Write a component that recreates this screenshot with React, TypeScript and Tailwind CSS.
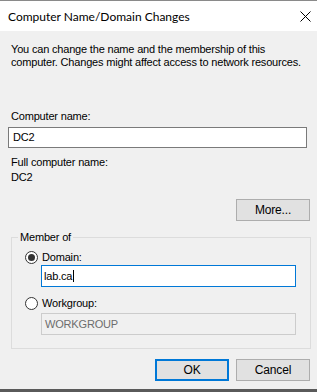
import React from "react"

function Radio({ checked }: { checked?: boolean }) {
  return (
    <span className="flex h-[13px] w-[13px] shrink-0 items-center justify-center rounded-full border border-[#333333] bg-white">
      {checked && <span className="h-[7px] w-[7px] rounded-full bg-[#333333]" />}
    </span>
  )
}

function WinButton({ label, primary }: { label: string; primary?: boolean }) {
  return (
    <button
      className={
        "flex h-[22px] w-[74px] items-center justify-center bg-[#e1e1e1] text-[12px] text-black " +
        (primary ? "border-2 border-[#0078d7]" : "border border-[#adadad]")
      }
    >
      {label}
    </button>
  )
}

export default function App() {
  return (
    <div className="flex h-[392px] w-[317px] flex-col overflow-hidden border-t border-b-[3px] border-t-[#8a8a8a] border-b-[#5a5a5a] bg-[#f0f0f0] font-['Liberation_Sans',Arial,sans-serif] text-[11px] leading-[13px] tracking-[-0.18px] text-black">
      {/* title bar */}
      <div className="flex h-[30px] shrink-0 items-center justify-between bg-white pl-[8px] pr-[6px]">
        <span className="font-['Lato',sans-serif] text-[12px] tracking-normal">Computer Name/Domain Changes</span>
        <svg width="11" height="11" viewBox="0 0 11 11">
          <path d="M0.5 0.5 L10.5 10.5 M10.5 0.5 L0.5 10.5" stroke="#000" strokeWidth="1" />
        </svg>
      </div>

      {/* body */}
      <div className="flex flex-1 flex-col">
        <p className="ml-[11px] mt-[12px]">
          You can change the name and the membership of this
          <br />
          computer. Changes might affect access to network resources.
        </p>

        <div className="ml-[11px] mt-[41px]">Computer name:</div>
        <div className="ml-[8px] mt-[4px] flex h-[21px] w-[299px] items-center border border-[#7a7a7a] bg-white pl-[4px]">
          DC2
        </div>

        <div className="ml-[11px] mt-[8px]">Full computer name:</div>
        <div className="ml-[11px] mt-[2px]">DC2</div>

        <div className="ml-[236px] mt-[15px]">
          <WinButton label="More..." />
        </div>

        {/* Member of group */}
        <div className="relative ml-[11px] mt-[16px] w-[300px] border border-[#dcdcdc] pb-[13px]">
          <span className="absolute -top-[7px] left-[6px] bg-[#f0f0f0] px-[2px]">Member of</span>

          <div className="ml-[13px] mt-[13px] flex items-center gap-[4px]">
            <Radio checked />
            <span>Domain:</span>
          </div>
          <div className="ml-[29px] mt-[1px] flex h-[22px] w-[255px] items-center border border-[#0078d7] bg-white pl-[2px]">
            <span>lab.ca</span>
            <span className="ml-[1px] h-[12px] w-[1px] bg-black" />
          </div>

          <div className="ml-[13px] mt-[10px] flex items-center gap-[4px]">
            <Radio />
            <span>Workgroup:</span>
          </div>
          <div className="ml-[29px] mt-[3px] flex h-[22px] w-[255px] items-center border border-[#cccccc] bg-[#f0f0f0] pl-[3px] text-[#6d6d6d]">
            WORKGROUP
          </div>
        </div>

        <div className="ml-[155px] mt-[10px] flex gap-[7px]">
          <WinButton label="OK" primary />
          <WinButton label="Cancel" />
        </div>
      </div>
    </div>
  )
}
